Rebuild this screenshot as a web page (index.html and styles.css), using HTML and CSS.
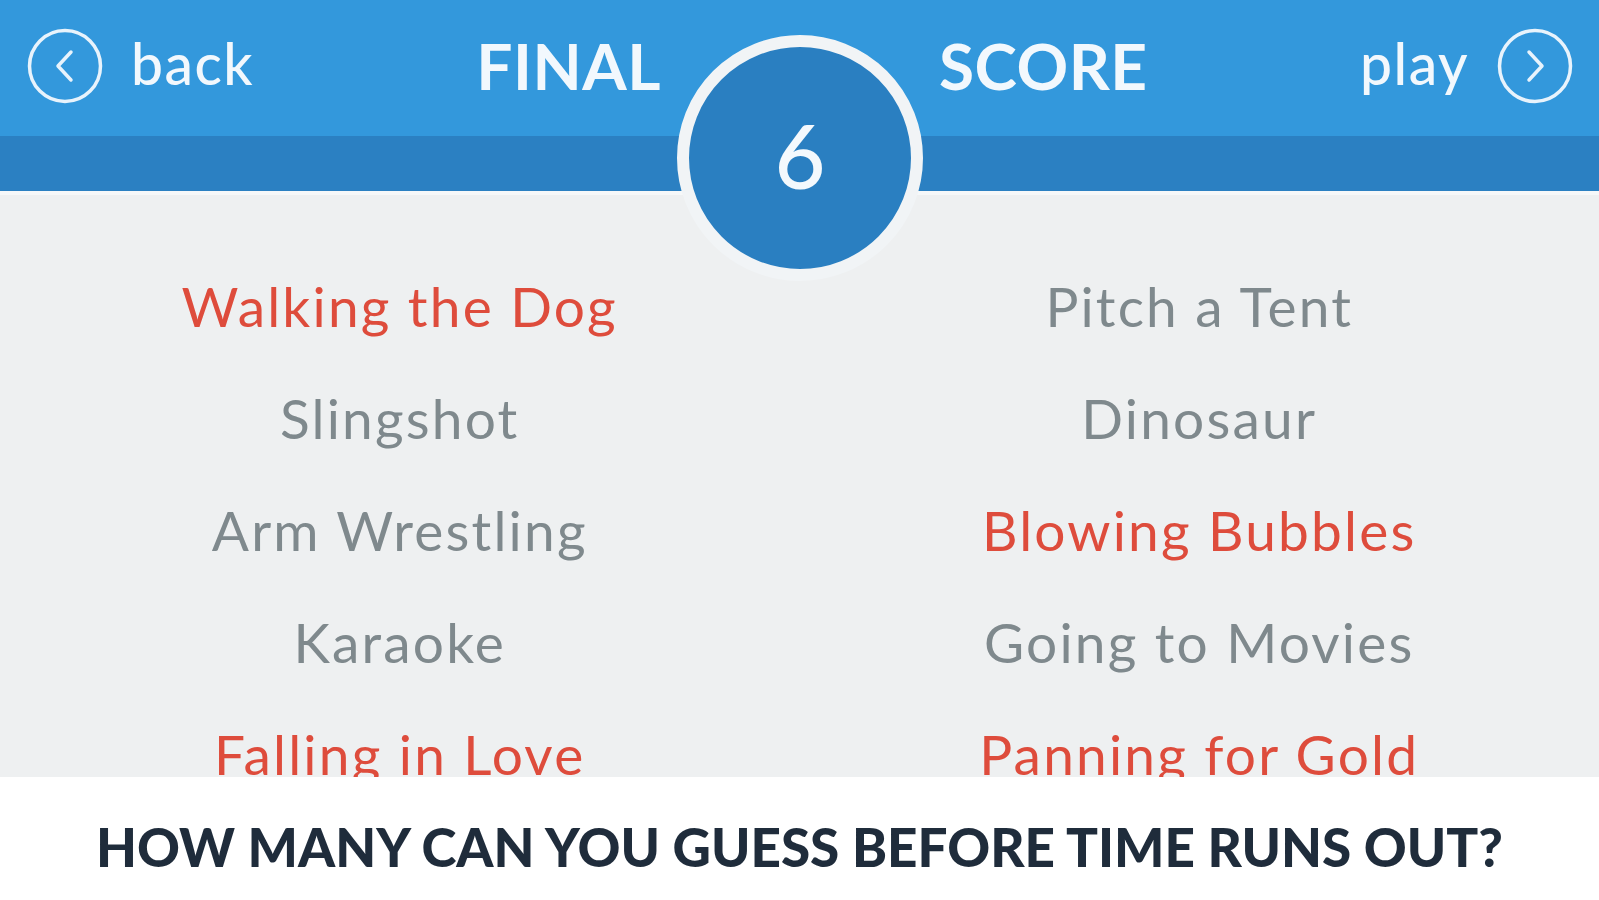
FILE: index.html
```html
<!DOCTYPE html>
<html lang="en">
<head>
<meta charset="utf-8">
<title>Final Score</title>
<link rel="stylesheet" href="styles.css">
</head>
<body>
<div class="screen">
  <header class="top">
    <div class="bar">
      <div class="side left">
        <a class="nav">
          <svg class="navicon" viewBox="0 0 76 76" width="76" height="76"><circle cx="38" cy="38" r="35.5" fill="none" stroke="#e8f3fc" stroke-width="3.5"/><path d="M44 24 L31 38 L44 52" fill="none" stroke="#e8f3fc" stroke-width="3.5" stroke-linecap="round" stroke-linejoin="round"/></svg>
          <span class="navtext">back</span>
        </a>
        <span class="title">FINAL</span>
      </div>
      <div class="gapcell"></div>
      <div class="side right">
        <span class="title">SCORE</span>
        <a class="nav">
          <span class="navtext">play</span>
          <svg class="navicon" viewBox="0 0 76 76" width="76" height="76"><circle cx="38" cy="38" r="35.5" fill="none" stroke="#e8f3fc" stroke-width="3.5"/><path d="M32 24 L45 38 L32 52" fill="none" stroke="#e8f3fc" stroke-width="3.5" stroke-linecap="round" stroke-linejoin="round"/></svg>
        </a>
      </div>
    </div>
    <div class="band"></div>
    <div class="score"><span>6</span></div>
  </header>
  <main class="words">
    <div class="word miss">Walking the Dog</div>
    <div class="word">Pitch a Tent</div>
    <div class="word">Slingshot</div>
    <div class="word">Dinosaur</div>
    <div class="word">Arm Wrestling</div>
    <div class="word miss">Blowing Bubbles</div>
    <div class="word">Karaoke</div>
    <div class="word">Going to Movies</div>
    <div class="word miss">Falling in Love</div>
    <div class="word miss">Panning for Gold</div>
  </main>
  <footer class="foot">HOW MANY CAN YOU GUESS BEFORE TIME RUNS OUT?</footer>
</div>
</body>
</html>
```
FILE: styles.css
```css
html, body {
  margin: 0;
  padding: 0;
  background: #ffffff;
}
body {
  font-family: "Lato", "Open Sans", sans-serif;
}
.screen {
  width: 1599px;
  height: 900px;
  overflow: hidden;
  display: flex;
  flex-direction: column;
}
.top {
  position: relative;
  flex: none;
}
.bar {
  height: 136px;
  background: #3398dc;
  display: grid;
  grid-template-columns: 661px 278px 1fr;
  align-items: center;
  color: #f2f8fd;
}
.side {
  display: flex;
  align-items: center;
  justify-content: space-between;
}
.side.left {
  padding-left: 27px;
}
.side.right {
  padding-right: 26px;
}
.nav {
  display: flex;
  align-items: center;
  gap: 28px;
}
.navicon {
  display: block;
  position: relative;
  top: -2px;
}
.navtext {
  font-size: 57px;
  font-weight: 500;
  line-height: 1;
  letter-spacing: 1.5px;
  position: relative;
  top: -5px;
}
.title {
  font-size: 64px;
  font-weight: 700;
  line-height: 1;
  letter-spacing: 0.5px;
  position: relative;
  top: -2px;
}
.band {
  height: 55px;
  background: #2b80c2;
  border-bottom: 4px solid #f6f8f9;
}
.score {
  position: absolute;
  left: 677px;
  top: 35px;
  width: 222px;
  height: 222px;
  border: 12px solid #f1f4f6;
  border-radius: 50%;
  background: #2a7fc1;
  display: flex;
  align-items: center;
  justify-content: center;
  color: #f4f9fd;
  font-size: 88px;
  font-weight: 500;
}
.score span {
  position: relative;
  top: -3px;
}
.words {
  flex: none;
  height: 582px;
  background: #eef0f1;
  overflow: hidden;
  display: grid;
  grid-template-columns: 1fr 1fr;
  grid-auto-rows: 112px;
  padding-top: 55px;
  box-sizing: border-box;
}
.word {
  text-align: center;
  font-size: 55px;
  line-height: 112px;
  color: #7f898d;
  letter-spacing: 2.2px;
  height: 112px;
}
.word.miss {
  color: #de4c3c;
}
.foot {
  flex: 1;
  display: flex;
  align-items: center;
  justify-content: center;
  font-size: 53px;
  font-weight: 900;
  color: #1f2c3b;
  letter-spacing: 0;
  padding-top: 16px;
}
```
